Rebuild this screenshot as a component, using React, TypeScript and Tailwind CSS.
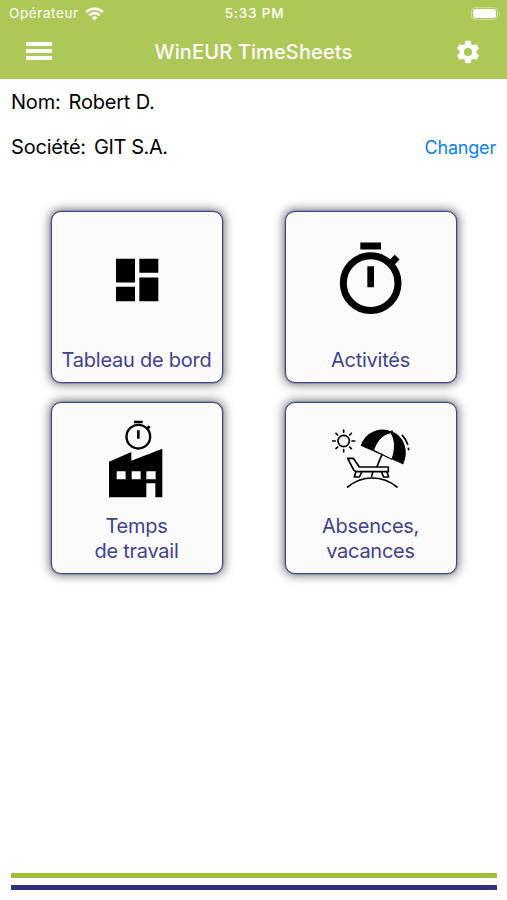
import type { ReactNode } from "react";
import { MdSettings } from "react-icons/md";

interface MenuCardProps {
  lines: string[];
  children: ReactNode;
}

const WifiIcon = () => (
  <svg width="19" height="14" viewBox="0 0 19 14" fill="none" stroke="#fff" strokeWidth="2.6">
    <path d="M1.2 5.2a11.7 11.7 0 0 1 16.6 0" />
    <path d="M4.3 8.3a7.4 7.4 0 0 1 10.4 0" />
    <path d="M9.5 13.4 6.7 10.6a4 4 0 0 1 5.6 0z" fill="#fff" stroke="none" />
  </svg>
);

const DashboardIcon = () => (
  <svg width="100" height="80" viewBox="141 119.500 300 240">
    <path d="M228 176h57v71h-57zM298 176h57v42h-57zM228 260h57v43h-57zM298 232h57v71h-57z" />
  </svg>
);

const TimerIcon = () => (
  <svg width="100" height="80" viewBox="138 119.500 300 240">
    <circle cx="287" cy="249" r="82" fill="none" stroke="#000" strokeWidth="21" />
    <path d="M256 127h62v21h-62zM277 198h20v63h-20zM341 182l18-18 15 14-18 18z" />
  </svg>
);

const FactoryIcon = () => (
  <svg width="100" height="80" viewBox="142 71 300 240">
    <circle cx="296" cy="124" r="35.500" fill="none" stroke="#000" strokeWidth="7" />
    <path d="M283 76h26v8h-26zM292 105h8v25h-8zM318 99l9-9 6 6-9 9z" />
    <path
      fillRule="evenodd"
      d="M208 199l67-29v26l93-36v146h-21v-42h-27v42H208zM231 228v24h27v-24zM276 228v24h27v-24zM320 228v24h28v-24z"
    />
  </svg>
);

const BeachIcon = () => (
  <svg
    width="100"
    height="80"
    viewBox="3 -4 300 240"
    fill="none"
    stroke="#000"
    strokeWidth="5"
    strokeLinecap="round"
    strokeLinejoin="round"
  >
    {/* sun */}
    <circle cx="71" cy="62" r="17" />
    <path d="M71 29v7M71 88v6M38 62h8M96 62h8M48 39l5 5M94 39l-5 5M48 85l5-5M94 85l-5-5" />
    {/* umbrella */}
    <path d="M125 75C139 37 178 21 215 36C248 49 265 88 248 129Z" fill="#000" />
    <path d="M161 89C170 62 185 43 212 37C226 55 227 87 216 116Z" fill="#fafbfa" strokeWidth="3" />
    <path d="M216 32v6M186 102l-15 37" />
    <path d="M247 45q11 12 16 27M265 84l1 4" />
    {/* deck chair */}
    <path d="M83 114h17l18 26h87v14h-96q-7-1-10-9z" />
    <path d="M107 156l-4 14h15l7-14M158 156l-3 12M185 156l6 14h15l-5-14" />
    <path d="M83 200c43-36 104-36 148 0" />
  </svg>
);

const MenuCard = ({ lines, children }: MenuCardProps) => (
  <button className="flex h-[172px] w-[172px] flex-col items-center rounded-[10px] border border-[#44448c] bg-[#fafbfa] pb-[10px] shadow-[0_0_0_0.5px_#77779f,0_0_10px_2px_rgba(0,0,0,0.5)]">
    <span className="flex flex-1 items-center justify-center">{children}</span>
    <span className="text-[20px] leading-[24.5px] tracking-[-0.25px] text-[#42428c]">
      {lines.map((line) => (
        <span key={line} className="block whitespace-nowrap">
          {line}
        </span>
      ))}
    </span>
  </button>
);

export default function App() {
  return (
    <div className="flex h-[900px] w-[507px] flex-col overflow-hidden bg-white font-['Inter','Liberation_Sans',sans-serif] text-black">
      <header className="h-[79px] bg-[#adc857] text-white">
        <div className="grid h-[27px] grid-cols-3 items-center pl-[9px] pr-[7px] text-[13px]">
          <div className="flex items-center gap-[6px]">
            <span className="text-[13.5px] tracking-[0.6px]">Opérateur</span>
            <WifiIcon />
          </div>
          <span className="text-center text-[13.5px] font-medium tracking-[0.8px]">5:33 PM</span>
          <div className="flex items-center justify-end gap-px">
            <span className="h-[13px] w-[27px] rounded-[4px] border border-white/40 p-px">
              <span className="block h-full rounded-[2.5px] bg-white" />
            </span>
            <span className="h-1 w-px rounded-r bg-white/40" />
          </div>
        </div>
        <div className="grid h-[50px] grid-cols-[80px_1fr_80px] items-center">
          <button className="mb-[3px] ml-[26px] flex w-[26px] flex-col gap-[3px]">
            <span className="h-1 bg-white" />
            <span className="h-1 bg-white" />
            <span className="h-1 bg-white" />
          </button>
          <h1 className="text-center text-[20px] font-medium tracking-[0.13px]">WinEUR TimeSheets</h1>
          <button className="ml-[27px] w-7">
            <MdSettings className="h-7 w-7" />
          </button>
        </div>
      </header>

      <section className="px-[11px] text-[20px] tracking-[-0.2px]">
        <p className="flex h-[45px] items-center gap-2">
          <span>Nom:</span>
          <span>Robert D.</span>
        </p>
        <div className="flex h-[46px] items-center justify-between">
          <p className="flex gap-2">
            <span>Société:</span>
            <span className="tracking-[-0.4px]">GIT S.A.</span>
          </p>
          <button className="text-[18px] text-[#087ff5]">Changer</button>
        </div>
      </section>

      <main className="mt-[41px] grid grid-cols-[172px_172px] justify-center gap-x-[62px] gap-y-[19px]">
        <MenuCard lines={["Tableau de bord"]}>
          <DashboardIcon />
        </MenuCard>
        <MenuCard lines={["Activités"]}>
          <TimerIcon />
        </MenuCard>
        <MenuCard lines={["Temps", "de travail"]}>
          <FactoryIcon />
        </MenuCard>
        <MenuCard lines={["Absences,", "vacances"]}>
          <BeachIcon />
        </MenuCard>
      </main>

      <footer className="mr-[10px] mb-[10px] ml-[11px] mt-auto flex flex-col gap-[7px]">
        <div className="h-[5px] bg-[#9fbd38]" />
        <div className="h-[5px] bg-[#303080]" />
      </footer>
    </div>
  );
}
